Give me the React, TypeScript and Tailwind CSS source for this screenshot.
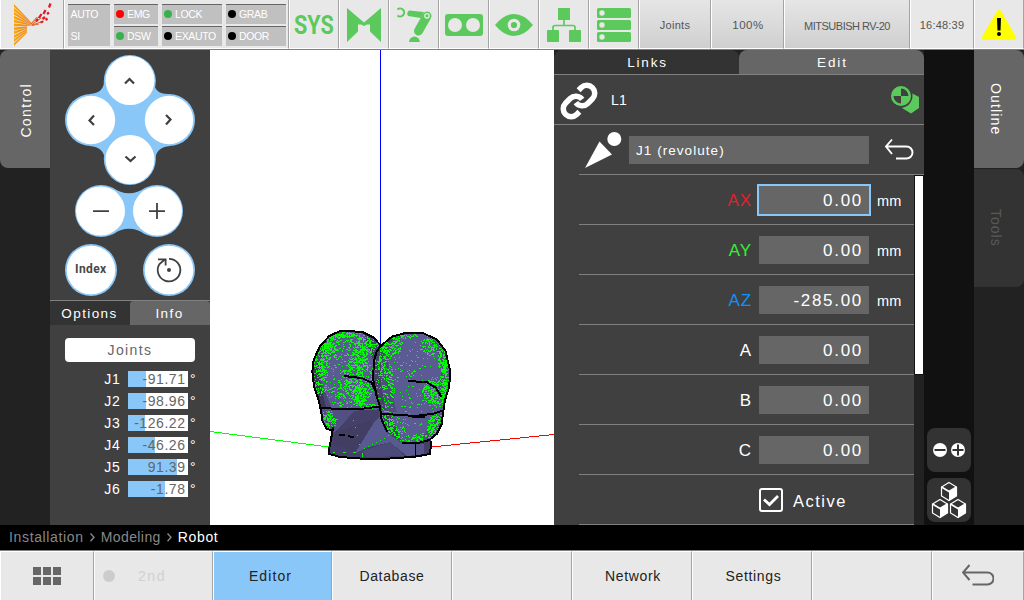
import React from "react";
import { Link } from "lucide-react";

const GREEN = "#5cc95c";

function HeaderCell({ w, grad, children }: { w: string; grad?: boolean; children?: React.ReactNode }) {
  return (
    <div
      className={`${w} flex shrink-0 items-center justify-center border-l border-r border-b border-l-white border-r-[#a4a4a4] border-b-white text-[11px] text-[#555] ${
        grad ? "bg-linear-to-b from-[#e6e6e6] to-[#cfcfcf]" : "bg-[#e8e8e8]"
      }`}
    >
      {children}
    </div>
  );
}

function Lamp({ color, label }: { color: string; label: string }) {
  return (
    <div className="flex h-5 items-center gap-[3.500px] border-t border-[#666] bg-[#c0c0c0] pl-[2px]">
      <span className={`h-2 w-2 shrink-0 rounded-full ${color}`} />
      <span className="pt-px">{label}</span>
    </div>
  );
}

function Logo() {
  const rays = Array.from({ length: 11 }, (_, i) => {
    const y0 = 4 + i * 3.9;
    const y1 = y0 + 3;
    const cy = 25.5;
    const end = i < 6 ? 31 : 26;
    const t = (end - 13) / 18;
    const a = y0 + (cy - y0) * t * 0.9;
    const b = y1 + (cy - y1) * t * 0.9;
    return `M13 ${y0}L${end} ${a}L${end} ${b}L13 ${y1}Z`;
  }).join("");
  return (
    <svg width="62" height="49" viewBox="0 0 62 49">
      <defs>
        <linearGradient id="lg" x1="0" x2="1">
          <stop offset="0" stopColor="#fba70c" />
          <stop offset="1" stopColor="#e8741b" />
        </linearGradient>
      </defs>
      <path d={rays} fill="url(#lg)" />
      <g stroke="#e2622a" strokeWidth="1" fill="none">
        <path d="M30 24L41 14M31 24.500L40 18M31 25L43 21M31 25.500L38 24M30 24L36 17" />
      </g>
      <g stroke="#d91f2c" strokeWidth="2.300" fill="none">
        <path d="M49.500 3.500L48 7.500M44.500 10L42.500 14M46 14L48 12.500M40.500 14L38 18M44 17L41.500 19M46.500 18.500L44.500 20M37 19L35 21.500M42 21.500L39.500 22.500" />
      </g>
    </svg>
  );
}

function UndoArrow({ stroke }: { stroke: string }) {
  return (
    <svg width="32" height="24" viewBox="0 0 32 24" fill="none" stroke={stroke} strokeWidth="2">
      <path d="M7.500 1L1 8.500L7.500 16M1.500 8.500H25.500a6 6 0 0 1 0 12H10.500" />
    </svg>
  );
}

function Crumb() {
  return (
    <svg className="mx-[6px]" width="5" height="9" viewBox="0 0 5 9" fill="none" stroke="#888" strokeWidth="1.400">
      <path d="M0.500 0.500L4 4.300L0.500 8.200" />
    </svg>
  );
}

/* jog pad */
function Pad() {
  return (
    <svg className="block" width="160" height="250" viewBox="50 50 160 250">
      <g fill="#89c7f8">
        <circle cx="129.800" cy="81" r="26" />
        <circle cx="129.800" cy="159" r="26" />
        <circle cx="91" cy="120" r="26" />
        <circle cx="169" cy="120" r="26" />
        <path d="M154 81Q154 94 168 94L170 146Q156 147 155 160H105Q104 147 90 146V94Q104 93 104 81Z" />
        <circle cx="101" cy="211" r="26" />
        <circle cx="157" cy="211" r="26" />
        <path d="M112 187.500Q129 199 146 187.500V234.500Q129 223 112 234.500Z" />
        <circle cx="91" cy="270" r="26" />
        <circle cx="169" cy="270" r="26" />
      </g>
      <g fill="#fff">
        <circle cx="130" cy="80.500" r="24.500" />
        <circle cx="130" cy="159.500" r="24.500" />
        <circle cx="91" cy="120" r="24.200" />
        <circle cx="169" cy="120" r="24.200" />
        <circle cx="100.500" cy="211" r="24.500" />
        <circle cx="157.500" cy="211" r="24.500" />
        <circle cx="91" cy="270" r="24.300" />
        <circle cx="169" cy="270" r="24.300" />
      </g>
      <g fill="none" stroke="#404040" strokeWidth="2.200">
        <path d="M125 83.500L129.500 79L134 83.500M125.500 156.500L130.500 161L135.500 156.500M94 115.500L89.500 120.500L94 125M166 115L170.500 119.500L166 124.500" />
        <path d="M93 211.200H109M149 211.200H165M157 203V219" strokeWidth="1.800" />
        <path d="M169 258.800A11.300 11.300 0 1 1 159.500 264L165 259.300M158 259.300H165.600V265.500" strokeWidth="1.800" />
      </g>
      <circle cx="169" cy="270" r="2" fill="#404040" />
      <text x="90.800" y="273" textAnchor="middle" className="fill-[#484848] font-['Roboto',sans-serif] text-[12px] font-bold tracking-[0.400px]">
        Index
      </text>
    </svg>
  );
}

const SHAPE_L =
  "M37 155L41 120L60 78L88 48L118 34L150 33L190 37L220 52L242 76L236 262L240 290L103 335L80 326L68 305L62 265L52 228L42 200Z";
const SHAPE_R =
  "M242 78L276 50L316 39L370 40L410 58L436 92L450 150L448 200L435 240L429 280L425 312L410 342L388 360L350 370L305 368L262 335L245 300L240 260L229 225L220 180L221 125L230 95Z";

type Cluster = [number, number, number, number, number];

/* cx, cy, rx, ry, count */
const CLUSTERS_L: Cluster[] = [
  [125, 44, 40, 9, 110],
  [85, 78, 34, 40, 210],
  [62, 120, 26, 50, 160],
  [58, 175, 24, 55, 130],
  [170, 95, 34, 60, 200],
  [178, 175, 50, 70, 380],
  [178, 225, 20, 34, 150],
  [208, 70, 34, 34, 150],
  [84, 300, 24, 30, 130],
  [130, 215, 50, 50, 140],
  [120, 110, 60, 60, 90],
  [208, 258, 28, 8, 50],
];
const CLUSTERS_R: Cluster[] = [
  [300, 46, 60, 10, 80],
  [270, 75, 32, 34, 120],
  [245, 125, 26, 55, 130],
  [255, 200, 30, 75, 140],
  [258, 305, 22, 36, 100],
  [290, 330, 26, 40, 80],
  [395, 75, 34, 34, 120],
  [430, 115, 18, 40, 150],
  [436, 175, 16, 60, 150],
  [405, 215, 40, 45, 230],
  [408, 320, 28, 40, 210],
  [360, 355, 50, 16, 90],
  [330, 110, 80, 70, 70],
  [340, 240, 80, 90, 80],
];

function speckle(clusters: Cluster[], seed: number) {
  let s = seed;
  const rnd = () => {
    s = (s * 1664525 + 1013904223) % 4294967296;
    return s / 4294967296;
  };
  let d = "";
  clusters.forEach(([cx, cy, rx, ry, n]) => {
    for (let i = 0; i < n; i++) {
      const a = rnd() * Math.PI * 2;
      const r = Math.pow(rnd(), 0.6);
      const x = Math.round((cx + Math.cos(a) * r * rx) / 3) * 3;
      const y = Math.round((cy + Math.sin(a) * r * ry) / 3) * 3;
      const w = rnd() > 0.75 ? 6 : 3;
      d += `M${x} ${y}h${w}v3h-${w}z`;
    }
  });
  return d;
}

const DOTS_L = speckle(CLUSTERS_L, 17);
const DOTS_R = speckle(CLUSTERS_R, 91);

function Scene() {
  return (
    <svg className="block" width="344" height="475" viewBox="210 50 344 475" shapeRendering="crispEdges">
      <path d="M380.500 50V346" stroke="#0000ff" />
      <path d="M210 431.500L329 447" stroke="#00ff00" />
      <path d="M431 447L554 434.500" stroke="#ff0000" />
      <g transform="translate(300 320) scale(0.333333)">
        <defs>
          <clipPath id="cl"><path d={SHAPE_L} /></clipPath>
          <clipPath id="cr"><path d={SHAPE_R} /></clipPath>
        </defs>
        <path d="M103 320L97 355L87 385L88 402L120 411L185 416H265L345 410L390 402L394 350L300 250H110Z" fill="#44406a" />
        <path d="M222 308L165 400L200 383L270 366L320 408L345 405V372L300 366L255 333L240 290Z" fill="#5a5a92" />
        <path d="M186 394L270 366L312 408L200 411Z" fill="#4c4a78" />
        <path d="M165 275L110 325L95 375L165 394L220 308Z" fill="#413d63" />
        <path d="M345 372H372V404H345Z" fill="#55558a" />
        <path d={SHAPE_L} fill="#5b5b93" />
        <g clipPath="url(#cl)">
          <path d="M30 30H110L80 75L62 130L68 200L96 265L60 265L30 180Z" fill="#4b4a77" />
          <path d="M37 155L58 120L60 190L78 262H58Z" fill="#3b3857" />
          <path d="M190 35L245 75L222 130L200 70Z" fill="#44426c" />
          <path d="M60 265H180L105 330L80 326Z" fill="#524f83" />
          <path d={DOTS_L} fill="#00ff00" />
          <path d="M165 272L105 335L250 335L240 268Z" fill="#44406a" />
          <path d="M222 305L165 400H260V300Z" fill="#5a5a92" />
        </g>
        <path d="M100 320L88 385V402L120 411L185 416H265L345 410L390 402L394 362" fill="none" stroke="#000" strokeWidth="6" />
        <path d="M346 370V410" stroke="#000" strokeWidth="4" />
        <path d={SHAPE_R} fill="#5b5b93" />
        <g clipPath="url(#cr)">
          <path d="M300 35L262 75L244 125L242 190L258 270L240 270L215 180L220 90Z" fill="#454269" />
          <path d="M300 35L275 75L268 125L270 190L290 275L258 275L242 190L246 120L262 75Z" fill="#4f4e7f" />
          <path d="M242 285H272L305 365L262 340Z" fill="#44416a" />
          <path d="M345 375L428 275V345L400 370Z" fill="#504f80" />
          <path d="M380 40L430 90L450 160L438 240L415 200L430 130Z" fill="#504f80" />
          <path d={DOTS_R} fill="#00ff00" />
        </g>
        <g fill="none" stroke="#000" strokeWidth="6" strokeLinejoin="round">
          <path d="M242 76L220 52L190 37L150 33L118 34L88 48L60 78L41 120L37 155L42 200L52 228L62 265L68 305L80 326L100 333" />
          <path d="M58 263L100 266L180 267L236 260" />
          <path d="M132 168L185 174L215 188L228 215" />
          <path d="M118 346L136 346M144 349L162 351" />
          <path d="M262 335L245 300L240 260L229 225L220 180L221 125L230 95L242 78L276 50L316 39L370 40L410 58L436 92L450 150L448 200L435 240L429 280L425 312L410 342L388 360L350 370L305 368" />
          <path d="M240 281L300 285L345 288L400 281L429 272M335 291H375" />
          <path d="M325 183L382 187L408 204L425 232" />
        </g>
        <path d="M160 300h3v3h-3zM165 320h3v3h-3zM172 345h3v3h-3zM178 372h3v3h-3zM186 400h3v12h-3zM192 384h3v3h-3zM204 378h3v3h-3zM216 372h3v3h-3zM228 366h3v3h-3zM240 360h3v3h-3zM252 354h3v3h-3zM264 345h3v3h-3zM100 396h6v3h-6zM130 396h8v3h-8zM160 396h8v3h-8z" fill="#00ff00" />
      </g>
    </svg>
  );
}

function ParamRow({ label, color, value, unit, active }: { label: string; color: string; value: string; unit?: string; active?: boolean }) {
  return (
    <div className="flex h-[50px] items-start border-b border-[#808080] pt-[11px]">
      <div className={`w-[173px] text-right text-[17px] leading-[30px] tracking-[0.900px] ${color}`}>{label}</div>
      <div
        className={`ml-[7px] h-[28px] w-[110px] bg-[#666] pr-[6px] text-right text-[17px] leading-[30px] tracking-[1.700px] text-white ${
          active ? "outline-2 outline-[#89c7f8]" : ""
        }`}
      >
        {value}
      </div>
      <div className="ml-[8px] text-[14.500px] leading-[30px] tracking-[0.200px] text-white">{unit}</div>
    </div>
  );
}

function Cube({ x, y }: { x: number; y: number }) {
  return (
    <g transform={`translate(${x} ${y})`}>
      <path d="M0 -9L7.500 -4.500V4.500L0 9L-7.500 4.500V-4.500Z" fill="none" stroke="#fff" strokeWidth="1.200" />
      <path d="M-7.500 -4.500L0 0L7.500 -4.500" fill="none" stroke="#fff" strokeWidth="1.600" />
      <path d="M0 0L7.500 -4.500V4.500L0 9Z" fill="#fff" />
    </g>
  );
}

const JOINTS = [
  { n: "J1", v: "-91.71", w: 18 },
  { n: "J2", v: "-98.96", w: 18 },
  { n: "J3", v: "-126.22", w: 17 },
  { n: "J4", v: "-46.26", w: 27 },
  { n: "J5", v: "91.39", w: 49 },
  { n: "J6", v: "-1.78", w: 37 },
];

const PARAMS = [
  { label: "AX", color: "text-[#e0202b]", value: "0.00", unit: "mm", active: true },
  { label: "AY", color: "text-[#32f032]", value: "0.00", unit: "mm" },
  { label: "AZ", color: "text-[#1090f8]", value: "-285.00", unit: "mm" },
  { label: "A", color: "text-white", value: "0.00" },
  { label: "B", color: "text-white", value: "0.00" },
  { label: "C", color: "text-white", value: "0.00" },
];

function NavCell({ w, active, children }: { w: string; active?: boolean; children?: React.ReactNode }) {
  return (
    <div
      className={`${w} flex shrink-0 items-center justify-center border-l border-r border-t border-l-white border-t-white border-r-[#a4a4a4] text-[14px] text-[#222] ${
        active ? "bg-[#89c7f8] tracking-[1.100px]" : "bg-[#e8e8e8] tracking-[0.650px]"
      }`}
    >
      {children}
    </div>
  );
}

export default function App() {
  return (
    <div className="flex h-[600px] w-[1024px] flex-col overflow-hidden bg-black font-['Liberation_Sans',Arial,sans-serif] leading-none whitespace-nowrap">
      <header className="flex h-[50px] shrink-0 border-b border-[#808080]">
        <HeaderCell w="w-16"><Logo /></HeaderCell>
        <HeaderCell w="w-[225px]">
          <div className="mt-px grid h-[42px] w-[218px] grid-cols-[42px_44px_60px_60px] gap-x-[4px] gap-y-[2px] text-[10.500px] tracking-[-0.350px] text-white">
            <div className="row-span-2 flex flex-col justify-between border-t border-[#666] bg-[#c0c0c0] py-[4px] pl-[3px]">
              <span>AUTO</span>
              <span>SI</span>
            </div>
            <Lamp color="bg-[#ff0000]" label="EMG" />
            <Lamp color="bg-[#37b24a]" label="LOCK" />
            <Lamp color="bg-black" label="GRAB" />
            <Lamp color="bg-[#37b24a]" label="DSW" />
            <Lamp color="bg-black" label="EXAUTO" />
            <Lamp color="bg-black" label="DOOR" />
          </div>
        </HeaderCell>
        <HeaderCell w="w-[50px]">
          <span className="scale-x-[0.830] pt-[2px] font-['Roboto',sans-serif] text-[26px] font-bold text-[#5cc95c]">SYS</span>
        </HeaderCell>
        <HeaderCell w="w-[50px]">
          <svg width="48" height="48" viewBox="340 0 48 48" fill={GREEN}>
            <path d="M347 8L364 22.500L381 8V42L370 31.500V24.500H367L364 26L361 24.500H358V31.500L347 42Z" />
          </svg>
        </HeaderCell>
        <HeaderCell w="w-[50px]">
          <svg width="48" height="48" viewBox="390 0 48 48">
            <path d="M397.500 9.500A4 4 0 1 1 397.500 15.500" fill="none" stroke={GREEN} strokeWidth="2" />
            <path d="M409 10.500L424 12L421 18L408 16Q406 13 409 10.500Z" fill={GREEN} />
            <path d="M427 16L418.500 31" stroke={GREEN} strokeWidth="9" strokeLinecap="round" />
            <circle cx="427" cy="15.800" r="2.200" fill="none" stroke="#e8e8e8" strokeWidth="1.300" />
            <path d="M409 42A5.400 5.400 0 0 1 419.800 42Z" fill={GREEN} />
          </svg>
        </HeaderCell>
        <HeaderCell w="w-[50px]">
          <svg width="48" height="48" viewBox="440 0 48 48">
            <rect x="445" y="14" width="38" height="22" rx="3" fill={GREEN} />
            <circle cx="455" cy="25" r="7" fill="#e8e8e8" />
            <circle cx="473" cy="25" r="7" fill="#e8e8e8" />
          </svg>
        </HeaderCell>
        <HeaderCell w="w-[50px]">
          <svg width="48" height="48" viewBox="490 0 48 48">
            <path d="M495 25Q504 14 514 14T533 25Q524 36 514 36T495 25Z" fill={GREEN} />
            <circle cx="514" cy="25" r="6.300" fill="#e8e8e8" />
            <circle cx="514" cy="25" r="3.100" fill={GREEN} />
          </svg>
        </HeaderCell>
        <HeaderCell w="w-[50px]">
          <svg width="48" height="48" viewBox="540 0 48 48" fill={GREEN}>
            <rect x="558" y="8" width="12" height="12" rx=".5" />
            <rect x="547" y="30" width="12" height="12" rx=".5" />
            <rect x="569" y="30" width="12" height="12" rx=".5" />
            <path d="M564 19V25.500M553 31V27.500Q553 25.500 555 25.500H573Q575 25.500 575 27.500V31" fill="none" stroke={GREEN} strokeWidth="1.700" />
          </svg>
        </HeaderCell>
        <HeaderCell w="w-[50px]">
          <svg width="48" height="48" viewBox="590 0 48 48">
            {[8, 20, 32].map((y) => (
              <g key={y}>
                <rect x="597" y={y} width="34" height="10" rx="1.500" fill={GREEN} />
                <circle cx="602" cy={y + 5} r="2.700" fill="#e8e8e8" />
              </g>
            ))}
          </svg>
        </HeaderCell>
        <HeaderCell w="w-[72px]" grad><span className="pt-[2px] tracking-[0.300px]">Joints</span></HeaderCell>
        <HeaderCell w="w-[73px]" grad><span className="pt-[4px] pl-px text-[11.500px] tracking-[0.500px]">100%</span></HeaderCell>
        <HeaderCell w="w-[126px]" grad><span className="pt-[4px] tracking-[-0.500px]">MITSUBISH RV-20</span></HeaderCell>
        <HeaderCell w="w-16"><span className="pt-[2px] tracking-[0.200px]">16:48:39</span></HeaderCell>
        <HeaderCell w="w-[50px]">
          <svg width="48" height="48" viewBox="975 0 48 48">
            <path d="M999 12.500L984.500 37.500H1013.500Z" fill="#ff0" stroke="#ff0" strokeWidth="5" strokeLinejoin="round" />
            <path d="M997 18H1001L1000.500 30.500H997.500Z" />
            <circle cx="999" cy="34" r="2" />
          </svg>
        </HeaderCell>
      </header>

      <main className="flex h-[475px] shrink-0">
        <aside className="w-[50px] bg-[#222]">
          <div className="flex h-[118px] items-center justify-center rounded-l-lg bg-[#666]">
            <span className="rotate-180 pb-[2px] pr-[2px] text-[14px] tracking-[1.350px] text-white [writing-mode:vertical-rl]">Control</span>
          </div>
        </aside>

        <section className="w-[160px] bg-[#404040]">
          <Pad />
          <div className="flex h-[25px] border-t border-[#808080] text-[13.500px] text-white">
            <div className="flex w-[80px] items-center justify-center rounded-tl bg-[#333] pt-[2px] pr-px tracking-[1.400px]">Options</div>
            <div className="flex w-[80px] items-center justify-center rounded-t bg-[#666] pt-[2px] pr-px tracking-[1.400px]">Info</div>
          </div>
          <div className="mx-[15px] mt-[13px] flex h-6 items-center justify-center rounded bg-white text-[14px] tracking-[1.400px] text-[#666]">
            Joints
          </div>
          <div className="mt-[9px] flex flex-col gap-[6px]">
            {JOINTS.map((j) => (
              <div key={j.n} className="flex h-4 text-[14px] leading-[17px] text-white">
                <div className="w-[70.500px] text-right tracking-[0.700px]">{j.n}</div>
                <div className="relative ml-[7.500px] w-[60px] bg-white text-right text-[#666]">
                  <div className="absolute inset-y-0 left-0 bg-[#89c7f8]" style={{ width: j.w }} />
                  <span className="relative pr-[2.500px] tracking-[0.550px]">{j.v}</span>
                </div>
                <div className="ml-[2px]">°</div>
              </div>
            ))}
          </div>
        </section>

        <section className="w-[344px] bg-white"><Scene /></section>

        <section className="flex w-[370px] flex-col bg-[#404040]">
          <div className="flex h-[25px] shrink-0 border-b border-[#808080] bg-[#222] text-[13.500px] text-white">
            <div className="flex w-[185px] items-center justify-center rounded-t-lg bg-[#333] pt-px pl-[2px] tracking-[1.800px]">Links</div>
            <div className="flex w-[185px] items-center justify-center rounded-t-lg bg-[#666] pt-[2px] pl-[2px] tracking-[1.900px]">Edit</div>
          </div>
          <div className="flex h-[50px] shrink-0 items-center border-b border-[#808080] pl-[6px]">
            <Link className="mt-[3px]" size={38} strokeWidth={3.500} color="#fff" strokeLinecap="butt" />
            <span className="ml-[13px] mt-px text-[14px] tracking-[0.300px] text-white">L1</span>
            <svg className="ml-auto mr-[4px]" width="30" height="30" viewBox="890 85 30 30">
              <path d="M909.500 92L919 97V108L911 113.500L902 108Z" fill={GREEN} />
              <circle cx="901" cy="96" r="11.500" fill="#404040" />
              <circle cx="901" cy="96" r="10" fill={GREEN} />
              <path d="M901 96V88.500A7.500 7.500 0 0 1 908.500 96ZM901 96V103.500A7.500 7.500 0 0 1 893.500 96Z" fill="#404040" />
            </svg>
          </div>
          <div className="ml-[25px] flex h-[50px] shrink-0 items-start border-b border-[#808080]">
            <svg width="50" height="49" viewBox="579 125 50 49" fill="#fff">
              <path d="M585 168L599.500 141.500L612 154.500Z" />
              <circle cx="614.300" cy="139" r="7" />
            </svg>
            <div className="mt-[11px] h-[28px] w-[240px] bg-[#666] pl-[7px] text-[13.500px] leading-[29px] tracking-[1.050px] text-white">J1 (revolute)</div>
            <div className="ml-[15px] mt-[13px]">
              <svg width="30" height="24" viewBox="0 0 30 24" fill="none" stroke="#fff" strokeWidth="1.900">
                <path d="M8 1.500L2 8.500L8 16M2 8.500H22.500a6 6 0 0 1 0 12H12" />
              </svg>
            </div>
          </div>
          <div className="flex min-h-0 flex-1">
            <div className="w-[25px]" />
            <div className="w-[335px]">
              {PARAMS.map((p) => (
                <ParamRow key={p.label} {...p} />
              ))}
              <div className="flex h-[50px] items-center gap-[10px] border-b border-[#808080] pl-[180px]">
                <svg width="24" height="24" viewBox="0 0 24 24" fill="none" stroke="#fff">
                  <rect x="1" y="1" width="22" height="22" rx="2" strokeWidth="2" />
                  <path d="M5 11.500L10.500 16.500L19 8" strokeWidth="2.800" />
                </svg>
                <span className="pt-[3px] text-[16.500px] tracking-[1.500px] text-white">Active</span>
              </div>
            </div>
            <div className="w-[10px] bg-[#222]">
              <div className="h-[200px] border border-[#111] bg-white" />
            </div>
          </div>
        </section>

        <aside className="flex w-[50px] flex-col items-center justify-end gap-[6px] bg-[#111] pb-[3px]">
          <div className="h-11 w-11 rounded-lg bg-[#333]">
            <svg width="44" height="44" viewBox="0 0 44 44">
              <circle cx="13" cy="22" r="7" fill="#fff" />
              <circle cx="31" cy="22" r="7" fill="#fff" />
              <path d="M7.500 22H18.500M25.500 22H36.500M31 16.500V27.500" stroke="#333" strokeWidth="2" />
            </svg>
          </div>
          <div className="h-11 w-11 rounded-lg bg-[#333]">
            <svg width="44" height="44" viewBox="0 0 44 44">
              <Cube x={22} y={13.5} />
              <Cube x={13} y={30.500} />
              <Cube x={31} y={30.500} />
            </svg>
          </div>
        </aside>

        <aside className="flex w-[50px] flex-col gap-px bg-[#222]">
          <div className="flex h-[118px] items-center justify-center rounded-r-lg bg-[#666]">
            <span className="pr-[6px] text-[14px] tracking-[1.150px] text-white [writing-mode:vertical-rl]">Outline</span>
          </div>
          <div className="flex h-[118px] items-center justify-center rounded-r-lg bg-[#333]">
            <span className="pr-[6px] text-[14px] tracking-[1px] text-[#595959] [writing-mode:vertical-rl]">Tools</span>
          </div>
        </aside>
      </main>

      <div className="flex h-[25px] shrink-0 items-center pb-px pl-[9px] text-[14px] tracking-[0.650px] text-[#888]">
        <span>Installation</span>
        <Crumb />
        <span className="tracking-[0.400px]">Modeling</span>
        <Crumb />
        <span className="text-white">Robot</span>
      </div>

      <footer className="flex h-[50px] shrink-0 border-t border-[#808080]">
        <NavCell w="w-[94px]">
          <div className="mb-px grid grid-cols-[8px_8px_8px] gap-[2px]">
            {[0, 1, 2, 3, 4, 5].map((i) => (
              <span key={i} className="h-2 w-2 bg-[#666]" />
            ))}
          </div>
        </NavCell>
        <NavCell w="w-[119px]">
          <span className="mr-[23px] -ml-[38px] h-3 w-3 rounded-full bg-[#ccc]" />
          <span className="tracking-[1.500px] text-[#d0d0d0]">2nd</span>
        </NavCell>
        <NavCell w="w-[119px]" active><span className="pr-[4px]">Editor</span></NavCell>
        <NavCell w="w-[120px]">Database</NavCell>
        <NavCell w="w-[120px]" />
        <NavCell w="w-[120px]"><span className="pl-[2px]">Network</span></NavCell>
        <NavCell w="w-[120px]"><span className="pl-[3px]">Settings</span></NavCell>
        <NavCell w="w-[120px]" />
        <NavCell w="w-[92px]"><UndoArrow stroke="#666" /></NavCell>
      </footer>
    </div>
  );
}
